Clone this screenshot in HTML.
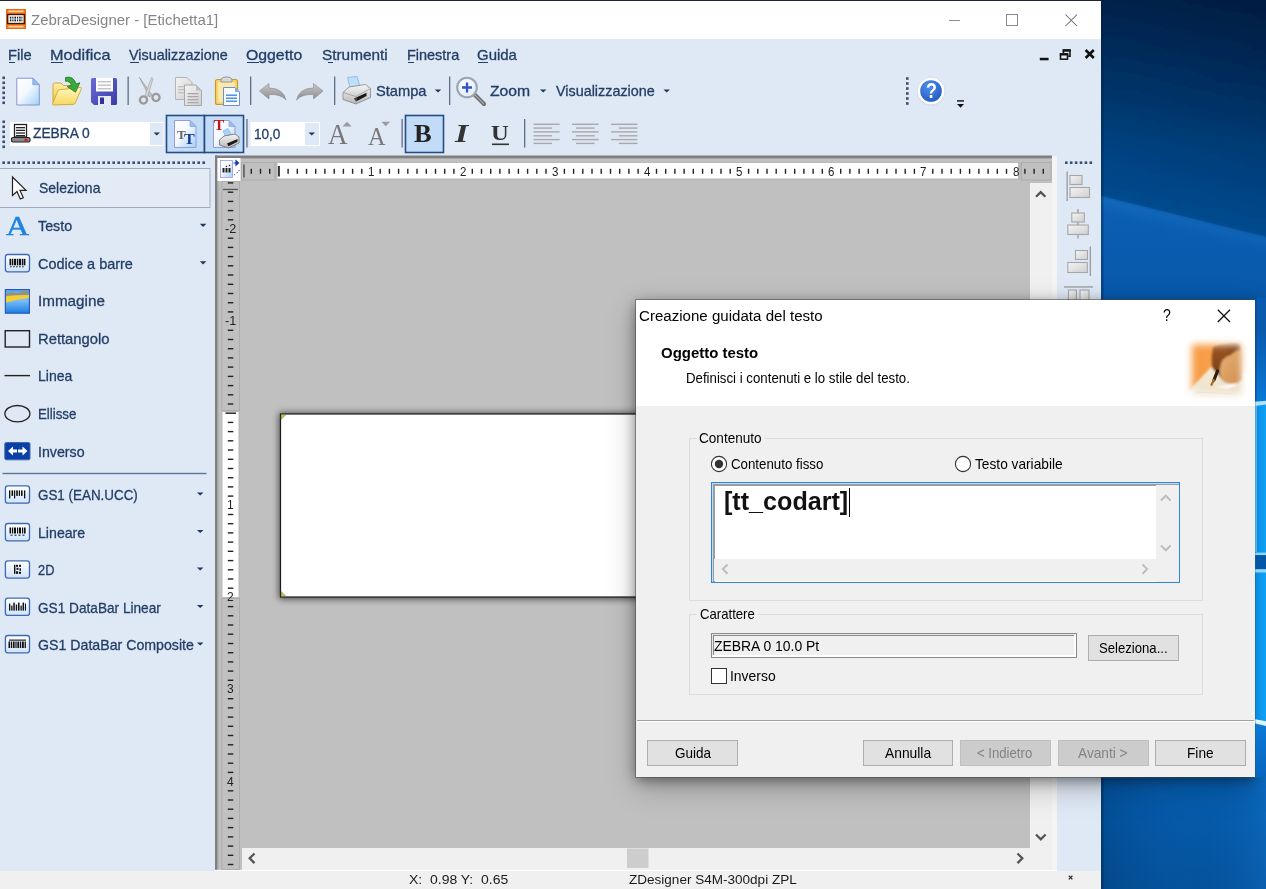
<!DOCTYPE html>
<html lang="it"><head><meta charset="utf-8"><title>ZebraDesigner - [Etichetta1]</title>
<style>

html,body{margin:0;padding:0;}
body{width:1266px;height:889px;overflow:hidden;position:relative;background:#0a5aa8;font-family:"Liberation Sans",sans-serif;}
.t{position:absolute;white-space:nowrap;transform-origin:0 50%;display:block;}
.abs{position:absolute;}
.hv{-webkit-text-stroke:0.3px currentColor;}
svg{position:absolute;overflow:visible;}
#app{position:absolute;left:0;top:0;width:1101px;height:889px;background:#dfe8f5;overflow:hidden;}
#dlg{position:absolute;left:636px;top:299px;width:619px;height:477px;background:#f0f0f0;box-shadow:0 0 0 1px rgba(70,70,70,.5), 0 3px 12px rgba(0,0,0,.42), 0 10px 28px rgba(0,0,0,.25);}
.btn{position:absolute;background:#e1e1e1;border:1px solid #adadad;box-sizing:border-box;}
.btn.dis{background:#cccccc;border-color:#bfbfbf;}
.grp{position:absolute;border:1px solid #dcdcdc;box-sizing:border-box;}
.sep{position:absolute;width:1px;background:#8a98ad;}

</style></head>
<body>
<div id="desktop" style="position:absolute;left:1101px;top:0;width:165px;height:889px;overflow:hidden;">
<svg width="165" height="889" viewBox="1101 0 165 889" style="left:0;top:0;">
<defs>
<linearGradient id="dgb" gradientUnits="userSpaceOnUse" x1="0" y1="190" x2="0" y2="889">
<stop offset="0" stop-color="#0b5fb4"/><stop offset="0.1" stop-color="#095bae"/><stop offset="0.16" stop-color="#0959ab"/><stop offset="0.3" stop-color="#0a66c0"/><stop offset="0.83" stop-color="#0868c2"/><stop offset="0.87" stop-color="#055cac"/><stop offset="1" stop-color="#04529a"/>
</linearGradient>
<linearGradient id="dgu" gradientUnits="userSpaceOnUse" x1="0" y1="0" x2="0" y2="240">
<stop offset="0" stop-color="#03234c"/><stop offset="0.2" stop-color="#032c5c"/><stop offset="0.42" stop-color="#04386f"/><stop offset="0.62" stop-color="#044483"/><stop offset="0.8" stop-color="#044a8d"/><stop offset="1" stop-color="#054f97"/>
</linearGradient>
<linearGradient id="dg2" x1="0" y1="0" x2="1" y2="0">
<stop offset="0" stop-color="#000c28" stop-opacity="0"/><stop offset="1" stop-color="#000c28" stop-opacity="0.3"/>
</linearGradient>
<linearGradient id="dg2m" x1="0" y1="0" x2="0" y2="1">
<stop offset="0" stop-color="#fff"/><stop offset="0.6" stop-color="#fff" stop-opacity="0.55"/><stop offset="1" stop-color="#fff" stop-opacity="0.15"/>
</linearGradient>
<mask id="dm2"><rect x="1090" y="-10" width="190" height="260" fill="url(#dg2m)"/></mask>
<linearGradient id="dg3" gradientUnits="userSpaceOnUse" x1="1183" y1="217" x2="1179" y2="235">
<stop offset="0" stop-color="#2a86d8" stop-opacity="0.28"/><stop offset="1" stop-color="#1068bc" stop-opacity="0"/>
</linearGradient>
<linearGradient id="dg6" gradientUnits="userSpaceOnUse" x1="1101" y1="0" x2="1266" y2="0">
<stop offset="0" stop-color="#02356e" stop-opacity="0.35"/><stop offset="0.6" stop-color="#0a5cb0" stop-opacity="0"/><stop offset="1" stop-color="#1a80e0" stop-opacity="0.3"/>
</linearGradient>
<filter id="dbl" x="-10%" y="-10%" width="120%" height="120%"><feGaussianBlur stdDeviation="2"/></filter>
</defs>
<rect x="1101" y="0" width="165" height="889" fill="url(#dgb)"/>
<g filter="url(#dbl)">
<polygon points="1090,-10 1280,-10 1280,241.500 1090,194" fill="url(#dgu)"/>
<polygon points="1090,-10 1280,-10 1280,241.500 1090,194" fill="url(#dg2)" mask="url(#dm2)"/>
</g>
<polygon points="1101,196 1266,237 1266,262 1101,221" fill="url(#dg3)"/>
<rect x="1101" y="777" width="165" height="112" fill="url(#dg6)"/>
<rect x="1101" y="0" width="2.500" height="889" fill="#021c40" opacity="0.35"/>
</svg></div>
<div id="app">
<div style="position:absolute;left:0px;top:0px;width:1101px;height:1px;background:#1d2733;"></div>
<div class="titlebar" style="position:absolute;left:0px;top:1px;width:1101px;height:38px;background:#ffffff;"></div>
<svg width="20" height="20" viewBox="0 0 21 21" style="left:6px;top:9px;">
<rect x="0" y="0" width="21" height="21" fill="#e8660c"/>
<rect x="1" y="1" width="19" height="19" fill="#f27a1a"/>
<rect x="2.5" y="1.5" width="16" height="2" fill="#f9c79a"/>
<rect x="2.5" y="17.5" width="16" height="2" fill="#f9c79a"/>
<rect x="1" y="5" width="19" height="11" fill="#3a1a08"/>
<rect x="2.5" y="6.5" width="16" height="8" fill="#fff"/>
<g fill="#1a1a1a"><rect x="4" y="8" width="1.6" height="5"/><rect x="6.6" y="8" width="1.2" height="5"/><rect x="8.8" y="8" width="1.8" height="5"/><rect x="11.6" y="8" width="1.2" height="5"/><rect x="13.8" y="8" width="1.6" height="5"/><rect x="16.2" y="8" width="1" height="5"/></g>
<rect x="3" y="10" width="15" height="1" fill="#fff" opacity="0.85"/>
</svg>
<span class="t" style="left:31.4px;top:11.9px;font-size:15px;line-height:15px;color:#858585;transform:scaleX(0.9980);">ZebraDesigner - [Etichetta1]</span>
<svg width="140" height="38" viewBox="960 1 140 38" style="left:960px;top:1px;">
<path d="M949 20.5h11" stroke="#8c8c8c" stroke-width="1" fill="none"/>
<rect x="1006.5" y="14.5" width="11" height="11" stroke="#8c8c8c" stroke-width="1" fill="none"/>
<path d="M1065.5 14.500l11.500 11.500M1077 14.500l-11.500 11.500" stroke="#6a6a6a" stroke-width="1.05" fill="none"/>
</svg>
<span class="t hv" style="left:8.0px;top:48.1px;font-size:14.5px;line-height:14.5px;color:#223e66;transform:scaleX(1.0101);">File</span>
<span class="t hv" style="left:49.9px;top:48.1px;font-size:14.5px;line-height:14.5px;color:#223e66;transform:scaleX(1.1187);">Modifica</span>
<span class="t hv" style="left:129.4px;top:48.1px;font-size:14.5px;line-height:14.5px;color:#223e66;transform:scaleX(0.9902);">Visualizzazione</span>
<span class="t hv" style="left:246.4px;top:48.1px;font-size:14.5px;line-height:14.5px;color:#223e66;transform:scaleX(1.0894);">Oggetto</span>
<span class="t hv" style="left:321.9px;top:48.1px;font-size:14.5px;line-height:14.5px;color:#223e66;transform:scaleX(1.0589);">Strumenti</span>
<span class="t hv" style="left:406.9px;top:48.1px;font-size:14.5px;line-height:14.5px;color:#223e66;transform:scaleX(0.9967);">Finestra</span>
<span class="t hv" style="left:477.4px;top:48.1px;font-size:14.5px;line-height:14.5px;color:#223e66;transform:scaleX(1.0313);">Guida</span>
<div style="position:absolute;left:8.6px;top:61.5px;width:6.4px;height:1px;background:#223e66;"></div>
<div style="position:absolute;left:50.5px;top:61.5px;width:12.5px;height:1px;background:#223e66;"></div>
<div style="position:absolute;left:130px;top:61.5px;width:9px;height:1px;background:#223e66;"></div>
<div style="position:absolute;left:247px;top:61.5px;width:11.5px;height:1px;background:#223e66;"></div>
<div style="position:absolute;left:328px;top:61.5px;width:4.5px;height:1px;background:#223e66;"></div>
<div style="position:absolute;left:407.5px;top:61.5px;width:6.5px;height:1px;background:#223e66;"></div>
<div style="position:absolute;left:478px;top:61.5px;width:10px;height:1px;background:#223e66;"></div>
<svg width="60" height="20" viewBox="1040 45 60 20" style="left:1040px;top:45px;">
<rect x="1039.800" y="57.800" width="8.800" height="2.500" fill="#111"/>
<path d="M1063.400 53v-2.300h6.600v5.600h-1.800" stroke="#111" stroke-width="1.500" fill="none"/>
<rect x="1062.600" y="49.100" width="8.200" height="2.300" fill="#111"/>
<rect x="1060.500" y="54.200" width="7" height="5" stroke="#111" stroke-width="1.500" fill="none"/>
<rect x="1059.800" y="53.100" width="8.500" height="2.400" fill="#111"/>
<path d="M1085.600 50l8.200 8M1093.800 50l-8.200 8" stroke="#111" stroke-width="2.600" fill="none"/>
</svg>
<svg width="1101" height="45" viewBox="0 70 1101 45" style="left:0;top:70px;">
<defs>
<linearGradient id="gdoc" x1="0" y1="0" x2="1" y2="1"><stop offset="0" stop-color="#ffffff"/><stop offset="0.45" stop-color="#f4f9ff"/><stop offset="1" stop-color="#9fd0f4"/></linearGradient>
<linearGradient id="gfold" x1="0" y1="0" x2="0" y2="1"><stop offset="0" stop-color="#fdf0a8"/><stop offset="1" stop-color="#f0c33a"/></linearGradient>
<linearGradient id="gfold2" x1="0" y1="0" x2="0" y2="1"><stop offset="0" stop-color="#fff6c0"/><stop offset="1" stop-color="#f7d860"/></linearGradient>
<linearGradient id="gflop" x1="0" y1="0" x2="1" y2="1"><stop offset="0" stop-color="#6a6ad8"/><stop offset="1" stop-color="#3c3ca8"/></linearGradient>
<linearGradient id="ggray" x1="0" y1="0" x2="0" y2="1"><stop offset="0" stop-color="#c8c8c8"/><stop offset="1" stop-color="#8c8c8c"/></linearGradient>
<linearGradient id="ggray2" x1="0" y1="0" x2="1" y2="1"><stop offset="0" stop-color="#f4f4f4"/><stop offset="1" stop-color="#cfcfcf"/></linearGradient>
<radialGradient id="ghelp" cx="0.4" cy="0.3" r="0.8"><stop offset="0" stop-color="#4f8fe8"/><stop offset="1" stop-color="#1f58c0"/></radialGradient>
<linearGradient id="gprn" x1="0" y1="0" x2="0" y2="1"><stop offset="0" stop-color="#f6f6f6"/><stop offset="1" stop-color="#b8b8b8"/></linearGradient>
<radialGradient id="glens" cx="0.4" cy="0.35" r="0.7"><stop offset="0" stop-color="#ffffff"/><stop offset="1" stop-color="#dfeaf8"/></radialGradient>
</defs>
<rect x="2.4" y="76.5" width="2.6" height="2.6" fill="#3d4f6e"/><rect x="2.4" y="81.5" width="2.6" height="2.6" fill="#3d4f6e"/><rect x="2.4" y="86.5" width="2.6" height="2.6" fill="#3d4f6e"/><rect x="2.4" y="91.5" width="2.6" height="2.6" fill="#3d4f6e"/><rect x="2.4" y="96.5" width="2.6" height="2.6" fill="#3d4f6e"/><rect x="2.4" y="101.5" width="2.6" height="2.6" fill="#3d4f6e"/>
<path d="M16.800 78.200h16l6.500 6.500v20.300h-22.500z" fill="url(#gdoc)" stroke="#8d92d6" stroke-width="1"/>
<path d="M32.800 78.200v6.500h6.500z" fill="#8cc4f2" stroke="#8d92d6" stroke-width="0.800"/>
<path d="M53 84.500q0-1.500 1.500-1.500h6.500l2.500 2.500h9.500q1.500 0 1.500 1.500v15.500q0 1.500-1.500 1.500h-18.500q-1.500 0-1.500-1.500z" fill="url(#gfold)" stroke="#c9a02c" stroke-width="0.900"/>
<path d="M52.600 103.500l5.200-12.500q0.600-1.300 2-1.300l20.500-2.200q1.600 0 1 1.400l-6 14q-0.600 1.400-2 1.400l-19.700 0.700q-1.500 0-1-1.500z" fill="url(#gfold2)" stroke="#d0a830" stroke-width="0.900"/>
<path d="M65.500 77.500q8-2 10.500 6.500l3.800-1.200-4.300 9.400-8.300-5.600 4.200-1.300q-1.400-4.300-5.900-4z" fill="#3aa83a" stroke="#1f7a22" stroke-width="0.800"/>
<path d="M92.500 78h23q1.500 0 1.500 1.500v24q0 1.500-1.500 1.500h-21.500l-3-3v-22.500q0-1.500 1.500-1.500z" fill="url(#gflop)"/>
<rect x="96" y="78" width="17" height="13.500" fill="#fdfdfd"/>
<g fill="#c2c2c8"><rect x="98" y="81" width="13" height="1.400"/><rect x="98" y="84.500" width="13" height="1.400"/><rect x="98" y="88" width="13" height="1.400"/></g>
<rect x="98" y="96" width="13" height="9" fill="#e8e8f4"/><rect x="100" y="97.500" width="4" height="6.500" fill="#3030a0"/>
<rect x="127.5" y="76.500" width="1.300" height="28.500" fill="#5f6f88"/>
<rect x="250" y="76.500" width="1.300" height="28.500" fill="#5f6f88"/>
<rect x="334" y="76.500" width="1.300" height="28.500" fill="#5f6f88"/>
<rect x="449" y="76.500" width="1.300" height="28.500" fill="#5f6f88"/>
<g fill="none" stroke="#9a9a9a" stroke-width="2.300"><circle cx="143.500" cy="100" r="3.600"/><circle cx="156" cy="97.500" r="3.600"/></g>
<path d="M139.500 77.500l12.500 17.500-2.500 2z" fill="#c4c4c4" stroke="#9a9a9a" stroke-width="0.700"/><path d="M151.500 77.500l1.500 1-5.500 18.500-2.500-1.500z" fill="#d8d8d8" stroke="#a4a4a4" stroke-width="0.700"/>
<path d="M175.500 77.500h11.500l5 5v17h-16.500z" fill="url(#ggray2)" stroke="#b4b4b4" stroke-width="1"/>
<g fill="#c0c0c0"><rect x="178" y="86" width="8" height="1.300"/><rect x="178" y="89" width="8" height="1.300"/><rect x="178" y="92" width="8" height="1.300"/></g>
<path d="M184.500 85h11.500l5.500 5.500v15h-17z" fill="url(#ggray2)" stroke="#a8a8a8" stroke-width="1"/>
<path d="M196 85v5.500h5.500z" fill="#bdbdbd"/>
<g fill="#a8a8a8"><rect x="187.500" y="93" width="11" height="1.300"/><rect x="187.500" y="96" width="11" height="1.300"/><rect x="187.500" y="99" width="11" height="1.300"/><rect x="187.500" y="102" width="11" height="1.300"/></g>
<rect x="215.500" y="79.500" width="22" height="25" rx="2" fill="#f7d46a" stroke="#c99a2a" stroke-width="1.200"/>
<rect x="218" y="82" width="17" height="20" fill="#fbe9a8"/>
<path d="M221 80.500q0-3.500 5.500-3.500t5.500 3.500v1.500h-11z" fill="#d8d8d8" stroke="#8c8c8c" stroke-width="0.900"/>
<path d="M223.500 87.500h11.500l4.500 4.500v13.500h-16z" fill="#fafdff" stroke="#6f8fd0" stroke-width="1"/>
<path d="M235 87.500v4.500h4.500z" fill="#7ab0ee"/>
<g fill="#3f8ae0"><rect x="226" y="94.500" width="11" height="1.400"/><rect x="226" y="97.500" width="11" height="1.400"/><rect x="226" y="100.500" width="11" height="1.400"/></g>
<path d="M259.500 91l9.500-7.500v4.500q14 0 17 12q-5-6-17-5.500v4.500z" fill="url(#ggray)" stroke="#8a8a8a" stroke-width="0.600"/>
<path d="M323 91l-9.500-7.500v4.500q-14 0-17 12q5-6 17-5.500v4.500z" fill="url(#ggray)" stroke="#8a8a8a" stroke-width="0.600"/>
<path d="M347.500 77.500l9.500-1 3.500 12-9.500 2.500z" fill="#bfe0fa" stroke="#7fb4e6" stroke-width="0.800"/>
<path d="M343 92.500l6-5.500 16.500-2.500 5 4v9l-14.500 6.500-13-4.500z" fill="url(#gprn)" stroke="#8e8e8e" stroke-width="0.900"/>
<path d="M343 92.500l13 4 14.500-8" fill="none" stroke="#9a9a9a" stroke-width="0.800"/>
<path d="M354 98.500l12.500-5.800v3.300l-10.500 5.500z" fill="#1a1a1a"/>
<path d="M356 96.800v7" stroke="#9a9a9a" stroke-width="0.700"/>
<path d="M474.500 94.500l9.500 9.500" stroke="#6a6a6a" stroke-width="4" stroke-linecap="round"/>
<path d="M474.500 94.500l9 9" stroke="#a8a8a8" stroke-width="1.400" stroke-linecap="round"/>
<circle cx="467" cy="87.500" r="9.800" fill="url(#glens)" stroke="#9aa4b2" stroke-width="2"/>
<path d="M467 82.500v10M462 87.500h10" stroke="#2d56c8" stroke-width="2.300"/>
<polygon points="434.8,89.5 441.2,89.5 438.0,92.5" fill="#1e395b"/>
<polygon points="540,89.5 546.4,89.5 543.2,92.5" fill="#1e395b"/>
<polygon points="663.5,89.5 669.9,89.5 666.7,92.5" fill="#1e395b"/>
<rect x="906" y="77.2" width="2.6" height="2.6" fill="#3d4f6e"/><rect x="906" y="82.2" width="2.6" height="2.6" fill="#3d4f6e"/><rect x="906" y="87.2" width="2.6" height="2.6" fill="#3d4f6e"/><rect x="906" y="92.2" width="2.6" height="2.6" fill="#3d4f6e"/><rect x="906" y="97.2" width="2.6" height="2.6" fill="#3d4f6e"/><rect x="906" y="102.2" width="2.6" height="2.6" fill="#3d4f6e"/>
<circle cx="931" cy="91.800" r="14" fill="#c9d2e2" opacity="0.7"/>
<circle cx="931" cy="91" r="14" fill="#fdfdff" stroke="#d4dcec" stroke-width="1"/>
<circle cx="931" cy="91" r="10.800" fill="url(#ghelp)"/>
<rect x="957" y="100.200" width="7" height="1.400" fill="#111"/>
<polygon points="957,104 964,104 960.500,107.800" fill="#111"/>
</svg>
<span class="t" style="left:925.7px;top:80.6px;font-size:21.5px;line-height:21.5px;color:#ffffff;transform:scaleX(0.8300);font-weight:bold;">?</span>
<span class="t hv" style="left:375.9px;top:84.3px;font-size:14.5px;line-height:14.5px;color:#223e66;transform:scaleX(1.0086);">Stampa</span>
<span class="t hv" style="left:490.4px;top:84.3px;font-size:14.5px;line-height:14.5px;color:#223e66;transform:scaleX(1.0847);">Zoom</span>
<span class="t hv" style="left:555.9px;top:84.3px;font-size:14.5px;line-height:14.5px;color:#223e66;transform:scaleX(0.9902);">Visualizzazione</span>
<svg width="1101" height="44" viewBox="0 112 1101 44" style="left:0;top:112px;">
<rect x="2.4" y="120.5" width="2.6" height="2.6" fill="#3d4f6e"/><rect x="2.4" y="125.5" width="2.6" height="2.6" fill="#3d4f6e"/><rect x="2.4" y="130.5" width="2.6" height="2.6" fill="#3d4f6e"/><rect x="2.4" y="135.5" width="2.6" height="2.6" fill="#3d4f6e"/><rect x="2.4" y="140.5" width="2.6" height="2.6" fill="#3d4f6e"/><rect x="2.4" y="145.5" width="2.6" height="2.6" fill="#3d4f6e"/>
<rect x="10" y="122" width="153.500" height="24" fill="#ffffff"/>
<rect x="150" y="123" width="13" height="22" fill="#dfe8f5"/>
<polygon points="153.5,132.5 160,132.5 156.75,135.6" fill="#1e395b"/>
<rect x="14.500" y="124.500" width="12" height="12.500" fill="#fff" stroke="#222" stroke-width="1.300"/>
<g fill="#222"><rect x="16" y="127" width="9" height="1.300"/><rect x="16" y="129.700" width="9" height="1.300"/><rect x="16" y="132.400" width="9" height="1.300"/><rect x="16" y="135" width="9" height="1.300"/></g>
<rect x="11.500" y="137.500" width="18.500" height="4.500" rx="1.500" fill="#8a8a8a" stroke="#222" stroke-width="1.200"/>
<rect x="24.500" y="138.700" width="3" height="2.300" fill="#e01818"/>
<rect x="166.500" y="115.500" width="38" height="37" fill="#c2dcf8" stroke="#264b85" stroke-width="1.600"/>
<rect x="204.500" y="115.500" width="39" height="37" fill="#c2dcf8" stroke="#264b85" stroke-width="1.600"/>
<path d="M174.500 120.500h15.500l6 6v21h-21.500z" fill="url(#gdoc)" stroke="#9a9ad8" stroke-width="1"/>
<path d="M190 120.500v6h6z" fill="#8cc4f2" stroke="#9a9ad8" stroke-width="0.700"/>
<path d="M213.500 120.500h15.500l6 6v21h-21.500z" fill="url(#gdoc)" stroke="#9a9ad8" stroke-width="1"/>
<path d="M229 120.500v6h6z" fill="#8cc4f2" stroke="#9a9ad8" stroke-width="0.700"/>
<path d="M223 131l5-2.500 3 5.500-5 3z" fill="#a8d4fa" stroke="#78b4ee" stroke-width="0.700"/>
<path d="M219.500 140l4.500-4 11-2 4 3v6l-10.500 5-9-3z" fill="url(#gprn)" stroke="#777" stroke-width="0.900"/>
<path d="M227 143.500l10.500-4.500v2.800l-9 4.400z" fill="#1a1a1a"/>
<rect x="246.3" y="119" width="1.300" height="28.500" fill="#5f6f88"/>
<rect x="401.5" y="119" width="1.300" height="28.500" fill="#5f6f88"/>
<rect x="524" y="119" width="1.300" height="28.500" fill="#5f6f88"/>
<rect x="250.500" y="122" width="69.500" height="24" fill="#ffffff"/>
<rect x="305" y="123" width="14" height="22" fill="#dfe8f5"/>
<polygon points="308.5,132.5 315,132.5 311.75,135.6" fill="#1e395b"/>
<polygon points="342.500,126.500 351.500,126.500 347,121.800" fill="#9a9a9a"/>
<polygon points="381.500,121.800 390,121.800 385.700,126.200" fill="#9a9a9a"/>
<rect x="405.500" y="115.500" width="38" height="37" fill="#c2dcf8" stroke="#264b85" stroke-width="1.600"/>
<rect x="492" y="143.500" width="17" height="1.600" fill="#333"/>
<rect x="533.5" y="123.6" width="26.1" height="1.400" fill="#a9a9a9"/><rect x="533.5" y="127.4" width="18.5" height="1.400" fill="#a9a9a9"/><rect x="533.5" y="131.2" width="26.1" height="1.400" fill="#a9a9a9"/><rect x="533.5" y="135.1" width="18.5" height="1.400" fill="#a9a9a9"/><rect x="533.5" y="138.9" width="26.1" height="1.400" fill="#a9a9a9"/><rect x="533.5" y="142.7" width="18.5" height="1.400" fill="#a9a9a9"/>
<rect x="572" y="123.6" width="26.6" height="1.400" fill="#a9a9a9"/><rect x="576" y="127.4" width="18.6" height="1.400" fill="#a9a9a9"/><rect x="572" y="131.2" width="26.6" height="1.400" fill="#a9a9a9"/><rect x="576" y="135.1" width="18.6" height="1.400" fill="#a9a9a9"/><rect x="572" y="138.9" width="26.6" height="1.400" fill="#a9a9a9"/><rect x="576" y="142.7" width="18.6" height="1.400" fill="#a9a9a9"/>
<rect x="611" y="123.6" width="26.4" height="1.400" fill="#a9a9a9"/><rect x="618.9" y="127.4" width="18.5" height="1.400" fill="#a9a9a9"/><rect x="611" y="131.2" width="26.4" height="1.400" fill="#a9a9a9"/><rect x="618.9" y="135.1" width="18.5" height="1.400" fill="#a9a9a9"/><rect x="611" y="138.9" width="26.4" height="1.400" fill="#a9a9a9"/><rect x="618.9" y="142.7" width="18.5" height="1.400" fill="#a9a9a9"/>
</svg>
<span class="t hv" style="left:32.9px;top:126.3px;font-size:14.5px;line-height:14.5px;color:#223e66;transform:scaleX(0.9508);">ZEBRA 0</span>
<span class="t hv" style="left:254.2px;top:126.5px;font-size:14.5px;line-height:14.5px;color:#223e66;transform:scaleX(0.9356);">10,0</span>
<span class="t" style="left:177.4px;top:129.8px;font-size:11.5px;line-height:11.5px;color:#666;transform:scaleX(1.1342);font-weight:bold;font-family:'Liberation Serif',serif;">T</span>
<span class="t" style="left:183.9px;top:131.4px;font-size:15.5px;line-height:15.5px;color:#1a3a9a;transform:scaleX(1.0349);font-weight:bold;font-family:'Liberation Serif',serif;">T</span>
<span class="t" style="left:213.9px;top:119.1px;font-size:14px;line-height:14px;color:#c01818;transform:scaleX(1.0923);font-weight:bold;font-family:'Liberation Serif',serif;">T</span>
<span class="t" style="left:328.1px;top:120.3px;font-size:29px;line-height:29px;color:#787878;transform:scaleX(0.9311);font-family:'Liberation Serif',serif;">A</span>
<span class="t" style="left:368.1px;top:123.6px;font-size:25px;line-height:25px;color:#787878;transform:scaleX(0.9693);font-family:'Liberation Serif',serif;">A</span>
<span class="t" style="left:414.4px;top:120.8px;font-size:25px;line-height:25px;color:#222;transform:scaleX(1.0614);font-weight:bold;font-family:'Liberation Serif',serif;">B</span>
<span class="t" style="left:455.4px;top:120.8px;font-size:25px;line-height:25px;color:#333;transform:scaleX(1.3566);font-weight:bold;font-family:'Liberation Serif',serif;font-style:italic;">I</span>
<span class="t" style="left:491.4px;top:121.9px;font-size:22px;line-height:22px;color:#333;transform:scaleX(1.1203);font-weight:bold;font-family:'Liberation Serif',serif;">U</span>
<svg width="215" height="720" viewBox="0 156 215 720" style="left:0;top:156px;">
<defs>
<linearGradient id="gbc" x1="0" y1="0" x2="0" y2="1"><stop offset="0" stop-color="#ffffff"/><stop offset="1" stop-color="#cfe4fb"/></linearGradient>
<linearGradient id="gsky" x1="0" y1="0" x2="0" y2="1"><stop offset="0" stop-color="#5aa8f0"/><stop offset="0.45" stop-color="#7cc0f8"/><stop offset="1" stop-color="#1d7ce2"/></linearGradient>
</defs>
<rect x="2.4" y="161.400" width="2.600" height="2.600" fill="#3d4f6e"/><rect x="7.4" y="161.400" width="2.600" height="2.600" fill="#3d4f6e"/><rect x="12.4" y="161.400" width="2.600" height="2.600" fill="#3d4f6e"/><rect x="17.4" y="161.400" width="2.600" height="2.600" fill="#3d4f6e"/><rect x="22.4" y="161.400" width="2.600" height="2.600" fill="#3d4f6e"/><rect x="27.4" y="161.400" width="2.600" height="2.600" fill="#3d4f6e"/><rect x="32.4" y="161.400" width="2.600" height="2.600" fill="#3d4f6e"/><rect x="37.4" y="161.400" width="2.600" height="2.600" fill="#3d4f6e"/><rect x="42.4" y="161.400" width="2.600" height="2.600" fill="#3d4f6e"/><rect x="47.4" y="161.400" width="2.600" height="2.600" fill="#3d4f6e"/><rect x="52.4" y="161.400" width="2.600" height="2.600" fill="#3d4f6e"/><rect x="57.4" y="161.400" width="2.600" height="2.600" fill="#3d4f6e"/><rect x="62.4" y="161.400" width="2.600" height="2.600" fill="#3d4f6e"/><rect x="67.4" y="161.400" width="2.600" height="2.600" fill="#3d4f6e"/><rect x="72.4" y="161.400" width="2.600" height="2.600" fill="#3d4f6e"/><rect x="77.4" y="161.400" width="2.600" height="2.600" fill="#3d4f6e"/><rect x="82.4" y="161.400" width="2.600" height="2.600" fill="#3d4f6e"/><rect x="87.4" y="161.400" width="2.600" height="2.600" fill="#3d4f6e"/><rect x="92.4" y="161.400" width="2.600" height="2.600" fill="#3d4f6e"/><rect x="97.4" y="161.400" width="2.600" height="2.600" fill="#3d4f6e"/><rect x="102.4" y="161.400" width="2.600" height="2.600" fill="#3d4f6e"/><rect x="107.4" y="161.400" width="2.600" height="2.600" fill="#3d4f6e"/><rect x="112.4" y="161.400" width="2.600" height="2.600" fill="#3d4f6e"/><rect x="117.4" y="161.400" width="2.600" height="2.600" fill="#3d4f6e"/><rect x="122.4" y="161.400" width="2.600" height="2.600" fill="#3d4f6e"/><rect x="127.4" y="161.400" width="2.600" height="2.600" fill="#3d4f6e"/><rect x="132.4" y="161.400" width="2.600" height="2.600" fill="#3d4f6e"/><rect x="137.4" y="161.400" width="2.600" height="2.600" fill="#3d4f6e"/><rect x="142.4" y="161.400" width="2.600" height="2.600" fill="#3d4f6e"/><rect x="147.4" y="161.400" width="2.600" height="2.600" fill="#3d4f6e"/><rect x="152.4" y="161.400" width="2.600" height="2.600" fill="#3d4f6e"/><rect x="157.4" y="161.400" width="2.600" height="2.600" fill="#3d4f6e"/><rect x="162.4" y="161.400" width="2.600" height="2.600" fill="#3d4f6e"/><rect x="167.4" y="161.400" width="2.600" height="2.600" fill="#3d4f6e"/><rect x="172.4" y="161.400" width="2.600" height="2.600" fill="#3d4f6e"/><rect x="177.4" y="161.400" width="2.600" height="2.600" fill="#3d4f6e"/><rect x="182.4" y="161.400" width="2.600" height="2.600" fill="#3d4f6e"/><rect x="187.4" y="161.400" width="2.600" height="2.600" fill="#3d4f6e"/><rect x="192.4" y="161.400" width="2.600" height="2.600" fill="#3d4f6e"/><rect x="197.4" y="161.400" width="2.600" height="2.600" fill="#3d4f6e"/><rect x="202.4" y="161.400" width="2.600" height="2.600" fill="#3d4f6e"/>
<rect x="-1" y="168.500" width="211" height="39" fill="#e3ebf7" stroke="#a3abb8" stroke-width="1"/>
<path d="M12.500 177v18.500l4.500-4 3.300 7.500 3-1.300-3.300-7.300h6z" fill="#ffffff" stroke="#222" stroke-width="1.200" stroke-linejoin="miter"/>
<rect x="5.400" y="254.5" width="24.100" height="17.300" rx="2.500" fill="url(#gbc)" stroke="#3f68b4" stroke-width="1.300"/><rect x="9.5" y="258.8" width="1.8" height="6.5" fill="#111"/><rect x="12" y="258.8" width="1.3" height="6.5" fill="#111"/><rect x="14" y="258.8" width="2.2" height="6.5" fill="#111"/><rect x="17" y="258.8" width="1.3" height="6.5" fill="#111"/><rect x="19" y="258.8" width="2.2" height="6.5" fill="#111"/><rect x="22" y="258.8" width="1.3" height="6.5" fill="#111"/><rect x="23.8" y="258.8" width="1.6" height="6.5" fill="#111"/><rect x="10" y="266.2" width="1.800" height="1.100" fill="#444"/><rect x="13" y="266.2" width="1.800" height="1.100" fill="#444"/><rect x="16" y="266.2" width="1.800" height="1.100" fill="#444"/><rect x="19" y="266.2" width="1.800" height="1.100" fill="#444"/><rect x="22" y="266.2" width="1.800" height="1.100" fill="#444"/>
<rect x="5.400" y="289.600" width="24" height="23.600" fill="url(#gsky)" stroke="#2a5cc0" stroke-width="1.200"/>
<path d="M6 293.500q5-2.500 9-1t7-1.200t7 1.200v4.500h-23z" fill="#8f9488"/>
<path d="M6 296.300q8-1.300 23-1.300v3q-12 1-23 4.500z" fill="#f6cf2e"/>
<rect x="5.200" y="330.700" width="24.300" height="16.300" fill="none" stroke="#222" stroke-width="1.400"/>
<rect x="4.500" y="374.900" width="25.500" height="1.400" fill="#222"/>
<ellipse cx="17.400" cy="413.700" rx="12.500" ry="8.200" fill="none" stroke="#222" stroke-width="1.300"/>
<rect x="4.800" y="442.500" width="25.200" height="17.300" rx="1.500" fill="#0a3fa6" stroke="#3f68b4" stroke-width="1"/>
<path d="M8 451l5-4.500v3h4v3h-4v3z" fill="#fff"/><path d="M27.500 451l-5-4.500v3h-4.500v3h4.500v3z" fill="#fff"/>
<rect x="2.500" y="472.800" width="204" height="1.400" fill="#5b7699"/>
<rect x="5.400" y="485.9" width="24.100" height="17.300" rx="2.500" fill="url(#gbc)" stroke="#3f68b4" stroke-width="1.300"/><rect x="9" y="490.4" width="1.3" height="8" fill="#111"/><rect x="11.5" y="490.4" width="1.6" height="5.5" fill="#111"/><rect x="14" y="490.4" width="1.2" height="8" fill="#111"/><rect x="16.2" y="490.4" width="1.6" height="5.5" fill="#111"/><rect x="18.8" y="490.4" width="1.2" height="5.5" fill="#111"/><rect x="21" y="490.4" width="1.6" height="5.5" fill="#111"/><rect x="24" y="490.4" width="1.3" height="8" fill="#111"/>
<rect x="5.400" y="523.5" width="24.100" height="17.300" rx="2.500" fill="url(#gbc)" stroke="#3f68b4" stroke-width="1.300"/><rect x="9.5" y="527.5" width="1.6" height="6" fill="#111"/><rect x="12" y="527.5" width="1.2" height="6" fill="#111"/><rect x="14" y="527.5" width="2" height="6" fill="#111"/><rect x="17" y="527.5" width="1.2" height="6" fill="#111"/><rect x="19" y="527.5" width="2" height="6" fill="#111"/><rect x="22" y="527.5" width="1.2" height="6" fill="#111"/><rect x="24" y="527.5" width="1.6" height="6" fill="#111"/><rect x="10.5" y="534.6" width="2" height="1.200" fill="#333"/><rect x="14.5" y="534.6" width="2" height="1.200" fill="#333"/><rect x="18.5" y="534.6" width="2" height="1.200" fill="#333"/><rect x="22.5" y="534.6" width="2" height="1.200" fill="#333"/>
<rect x="5.400" y="560.8" width="24.100" height="17.300" rx="2.500" fill="url(#gbc)" stroke="#3f68b4" stroke-width="1.300"/><rect x="14" y="564.8" width="1.4" height="9" fill="#111"/><rect x="16" y="564.8" width="2" height="2" fill="#111"/><rect x="19" y="564.8" width="2" height="2" fill="#111"/><rect x="16.5" y="567.8" width="2" height="2" fill="#111"/><rect x="19.5" y="568.3" width="1.5" height="2.5" fill="#111"/><rect x="16" y="571.3" width="2" height="2.5" fill="#111"/><rect x="18.8" y="571.8" width="2.2" height="2" fill="#111"/>
<rect x="5.400" y="598.1" width="24.100" height="17.300" rx="2.500" fill="url(#gbc)" stroke="#3f68b4" stroke-width="1.300"/><rect x="9" y="603.6" width="1.3" height="7" fill="#111"/><rect x="11.2" y="605.6" width="1.3" height="5" fill="#111"/><rect x="13.3" y="602.6" width="1.5" height="8" fill="#111"/><rect x="15.8" y="604.6" width="1.3" height="6" fill="#111"/><rect x="18" y="602.6" width="1.5" height="8" fill="#111"/><rect x="20.5" y="605.6" width="1.3" height="5" fill="#111"/><rect x="22.6" y="602.6" width="1.5" height="8" fill="#111"/><rect x="25" y="603.6" width="1" height="7" fill="#111"/>
<rect x="5.400" y="635.5" width="24.100" height="17.300" rx="2.500" fill="url(#gbc)" stroke="#3f68b4" stroke-width="1.300"/><rect x="8.5" y="641.5" width="1.5" height="6.500" fill="#111"/><rect x="10.8" y="641.5" width="1.2" height="6.500" fill="#111"/><rect x="12.8" y="641.5" width="1.8" height="6.500" fill="#111"/><rect x="15.4" y="641.5" width="1.2" height="6.500" fill="#111"/><rect x="17.4" y="641.5" width="1.8" height="6.500" fill="#111"/><rect x="20" y="641.5" width="1.2" height="6.500" fill="#111"/><rect x="22" y="641.5" width="1.8" height="6.500" fill="#111"/><rect x="24.6" y="641.5" width="1.3" height="6.500" fill="#111"/><rect x="9" y="639.5" width="17" height="1.300" fill="#333"/>
<polygon points="199.8,223.8 206.4,223.8 203.10000000000002,226.9" fill="#1e395b"/>
<polygon points="199.8,261.3 206.4,261.3 203.10000000000002,264.4" fill="#1e395b"/>
<polygon points="196.9,492.4 203.5,492.4 200.2,495.5" fill="#1e395b"/>
<polygon points="196.9,530 203.5,530 200.2,533.1" fill="#1e395b"/>
<polygon points="196.9,567.4 203.5,567.4 200.2,570.5" fill="#1e395b"/>
<polygon points="196.9,605 203.5,605 200.2,608.1" fill="#1e395b"/>
<polygon points="196.9,642.4 203.5,642.4 200.2,645.5" fill="#1e395b"/>
</svg>
<span class="t" style="left:5.7px;top:213.4px;font-size:27px;line-height:27px;color:#2082e0;transform:scaleX(1.1898);font-family:'Liberation Serif',serif;-webkit-text-stroke:0.5px #2082e0;">A</span>
<span class="t hv" style="left:39.2px;top:179.8px;font-size:15px;line-height:15px;color:#223e66;transform:scaleX(0.9320);">Seleziona</span>
<span class="t hv" style="left:38.4px;top:218.2px;font-size:15px;line-height:15px;color:#223e66;transform:scaleX(0.9540);">Testo</span>
<span class="t hv" style="left:38.4px;top:255.8px;font-size:15px;line-height:15px;color:#223e66;transform:scaleX(0.9646);">Codice a barre</span>
<span class="t hv" style="left:38.4px;top:293.2px;font-size:15px;line-height:15px;color:#223e66;transform:scaleX(1.0159);">Immagine</span>
<span class="t hv" style="left:38.4px;top:331.0px;font-size:15px;line-height:15px;color:#223e66;transform:scaleX(0.9855);">Rettangolo</span>
<span class="t hv" style="left:38.4px;top:368.2px;font-size:15px;line-height:15px;color:#223e66;transform:scaleX(0.9319);">Linea</span>
<span class="t hv" style="left:38.4px;top:406.0px;font-size:15px;line-height:15px;color:#223e66;transform:scaleX(0.8859);">Ellisse</span>
<span class="t hv" style="left:38.4px;top:443.6px;font-size:15px;line-height:15px;color:#223e66;transform:scaleX(0.9474);">Inverso</span>
<span class="t hv" style="left:38.4px;top:487.0px;font-size:15px;line-height:15px;color:#223e66;transform:scaleX(0.8936);">GS1 (EAN.UCC)</span>
<span class="t hv" style="left:38.4px;top:524.6px;font-size:15px;line-height:15px;color:#223e66;transform:scaleX(0.9434);">Lineare</span>
<span class="t hv" style="left:38.4px;top:562.0px;font-size:15px;line-height:15px;color:#223e66;transform:scaleX(0.8553);">2D</span>
<span class="t hv" style="left:38.4px;top:599.5px;font-size:15px;line-height:15px;color:#223e66;transform:scaleX(0.9092);">GS1 DataBar Linear</span>
<span class="t hv" style="left:38.4px;top:637.0px;font-size:15px;line-height:15px;color:#223e66;transform:scaleX(0.9445);">GS1 DataBar Composite</span>
<div class="mdi" style="position:absolute;left:215px;top:156px;width:837px;height:714px;background:#c0c0c0;"></div>
<svg width="890" height="735" viewBox="212 154 890 735" style="left:212px;top:154px;">
<rect x="215" y="155.500" width="837" height="2.500" fill="#7f7f7f"/>
<rect x="215" y="155.500" width="2.500" height="714.500" fill="#7f7f7f"/>
<rect x="217.500" y="158" width="834" height="1" fill="#a8a8a8"/>
<rect x="217.500" y="158" width="1" height="712" fill="#a8a8a8"/>
<rect x="1052" y="156" width="5" height="714" fill="#f4f4f4"/>
<rect x="215" y="869.800" width="842" height="1.200" fill="#ffffff"/>
<rect x="241" y="162" width="810" height="18.500" fill="#b9b9b9"/>
<rect x="241.500" y="162.500" width="33.500" height="17.500" fill="#c0c0c0" stroke="#adadad" stroke-width="1"/>
<rect x="1021.500" y="162.500" width="29.500" height="17.500" fill="#c0c0c0" stroke="#adadad" stroke-width="1"/>
<rect x="277.500" y="163" width="740.500" height="15.500" fill="#ffffff"/>
<rect x="221.500" y="181" width="18.500" height="688" fill="#b9b9b9"/>
<rect x="222" y="181.500" width="17.500" height="229" fill="#c0c0c0" stroke="#adadad" stroke-width="1"/>
<rect x="222" y="598.500" width="17.500" height="271" fill="#c0c0c0" stroke="#adadad" stroke-width="1"/>
<rect x="222.500" y="412" width="16" height="185" fill="#ffffff"/>
<rect x="250.6" y="168.800" width="1.400" height="5" fill="#222"/>
<rect x="259.8" y="168.800" width="1.400" height="5" fill="#222"/>
<rect x="269.0" y="168.800" width="1.400" height="5" fill="#222"/>
<rect x="277.9" y="166" width="2" height="10.500" fill="#333"/>
<rect x="287.4" y="168.800" width="1.400" height="5" fill="#222"/>
<rect x="296.6" y="168.800" width="1.400" height="5" fill="#222"/>
<rect x="305.8" y="168.800" width="1.400" height="5" fill="#222"/>
<rect x="315.0" y="168.800" width="1.400" height="5" fill="#222"/>
<rect x="324.2" y="168.800" width="1.400" height="5" fill="#222"/>
<rect x="333.5" y="168.800" width="1.400" height="5" fill="#222"/>
<rect x="342.7" y="168.800" width="1.400" height="5" fill="#222"/>
<rect x="351.9" y="168.800" width="1.400" height="5" fill="#222"/>
<rect x="361.1" y="168.800" width="1.400" height="5" fill="#222"/>
<rect x="379.5" y="168.800" width="1.400" height="5" fill="#222"/>
<rect x="388.7" y="168.800" width="1.400" height="5" fill="#222"/>
<rect x="397.9" y="168.800" width="1.400" height="5" fill="#222"/>
<rect x="407.1" y="168.800" width="1.400" height="5" fill="#222"/>
<rect x="416.3" y="168.800" width="1.400" height="5" fill="#222"/>
<rect x="425.6" y="168.800" width="1.400" height="5" fill="#222"/>
<rect x="434.8" y="168.800" width="1.400" height="5" fill="#222"/>
<rect x="444.0" y="168.800" width="1.400" height="5" fill="#222"/>
<rect x="453.2" y="168.800" width="1.400" height="5" fill="#222"/>
<rect x="471.6" y="168.800" width="1.400" height="5" fill="#222"/>
<rect x="480.8" y="168.800" width="1.400" height="5" fill="#222"/>
<rect x="490.0" y="168.800" width="1.400" height="5" fill="#222"/>
<rect x="499.2" y="168.800" width="1.400" height="5" fill="#222"/>
<rect x="508.4" y="168.800" width="1.400" height="5" fill="#222"/>
<rect x="517.7" y="168.800" width="1.400" height="5" fill="#222"/>
<rect x="526.9" y="168.800" width="1.400" height="5" fill="#222"/>
<rect x="536.1" y="168.800" width="1.400" height="5" fill="#222"/>
<rect x="545.3" y="168.800" width="1.400" height="5" fill="#222"/>
<rect x="563.7" y="168.800" width="1.400" height="5" fill="#222"/>
<rect x="572.9" y="168.800" width="1.400" height="5" fill="#222"/>
<rect x="582.1" y="168.800" width="1.400" height="5" fill="#222"/>
<rect x="591.3" y="168.800" width="1.400" height="5" fill="#222"/>
<rect x="600.5" y="168.800" width="1.400" height="5" fill="#222"/>
<rect x="609.8" y="168.800" width="1.400" height="5" fill="#222"/>
<rect x="619.0" y="168.800" width="1.400" height="5" fill="#222"/>
<rect x="628.2" y="168.800" width="1.400" height="5" fill="#222"/>
<rect x="637.4" y="168.800" width="1.400" height="5" fill="#222"/>
<rect x="655.8" y="168.800" width="1.400" height="5" fill="#222"/>
<rect x="665.0" y="168.800" width="1.400" height="5" fill="#222"/>
<rect x="674.2" y="168.800" width="1.400" height="5" fill="#222"/>
<rect x="683.4" y="168.800" width="1.400" height="5" fill="#222"/>
<rect x="692.6" y="168.800" width="1.400" height="5" fill="#222"/>
<rect x="701.9" y="168.800" width="1.400" height="5" fill="#222"/>
<rect x="711.1" y="168.800" width="1.400" height="5" fill="#222"/>
<rect x="720.3" y="168.800" width="1.400" height="5" fill="#222"/>
<rect x="729.5" y="168.800" width="1.400" height="5" fill="#222"/>
<rect x="747.9" y="168.800" width="1.400" height="5" fill="#222"/>
<rect x="757.1" y="168.800" width="1.400" height="5" fill="#222"/>
<rect x="766.3" y="168.800" width="1.400" height="5" fill="#222"/>
<rect x="775.5" y="168.800" width="1.400" height="5" fill="#222"/>
<rect x="784.8" y="168.800" width="1.400" height="5" fill="#222"/>
<rect x="794.0" y="168.800" width="1.400" height="5" fill="#222"/>
<rect x="803.2" y="168.800" width="1.400" height="5" fill="#222"/>
<rect x="812.4" y="168.800" width="1.400" height="5" fill="#222"/>
<rect x="821.6" y="168.800" width="1.400" height="5" fill="#222"/>
<rect x="840.0" y="168.800" width="1.400" height="5" fill="#222"/>
<rect x="849.2" y="168.800" width="1.400" height="5" fill="#222"/>
<rect x="858.4" y="168.800" width="1.400" height="5" fill="#222"/>
<rect x="867.6" y="168.800" width="1.400" height="5" fill="#222"/>
<rect x="876.8" y="168.800" width="1.400" height="5" fill="#222"/>
<rect x="886.1" y="168.800" width="1.400" height="5" fill="#222"/>
<rect x="895.3" y="168.800" width="1.400" height="5" fill="#222"/>
<rect x="904.5" y="168.800" width="1.400" height="5" fill="#222"/>
<rect x="913.7" y="168.800" width="1.400" height="5" fill="#222"/>
<rect x="932.1" y="168.800" width="1.400" height="5" fill="#222"/>
<rect x="941.3" y="168.800" width="1.400" height="5" fill="#222"/>
<rect x="950.5" y="168.800" width="1.400" height="5" fill="#222"/>
<rect x="959.7" y="168.800" width="1.400" height="5" fill="#222"/>
<rect x="968.9" y="168.800" width="1.400" height="5" fill="#222"/>
<rect x="978.2" y="168.800" width="1.400" height="5" fill="#222"/>
<rect x="987.4" y="168.800" width="1.400" height="5" fill="#222"/>
<rect x="996.6" y="168.800" width="1.400" height="5" fill="#222"/>
<rect x="1005.8" y="168.800" width="1.400" height="5" fill="#222"/>
<rect x="1024.2" y="168.800" width="1.400" height="5" fill="#222"/>
<rect x="1033.4" y="168.800" width="1.400" height="5" fill="#222"/>
<rect x="1042.6" y="168.800" width="1.400" height="5" fill="#222"/>
<rect x="243.200" y="164.500" width="1.500" height="13" fill="#555"/>
<rect x="227.800" y="182.2" width="5.500" height="1.400" fill="#222"/>
<rect x="227.800" y="191.5" width="5.500" height="1.400" fill="#222"/>
<rect x="227.800" y="200.7" width="5.500" height="1.400" fill="#222"/>
<rect x="227.800" y="209.9" width="5.500" height="1.400" fill="#222"/>
<rect x="227.800" y="219.1" width="5.500" height="1.400" fill="#222"/>
<rect x="227.800" y="237.5" width="5.500" height="1.400" fill="#222"/>
<rect x="227.800" y="246.7" width="5.500" height="1.400" fill="#222"/>
<rect x="227.800" y="255.9" width="5.500" height="1.400" fill="#222"/>
<rect x="227.800" y="265.1" width="5.500" height="1.400" fill="#222"/>
<rect x="227.800" y="274.3" width="5.500" height="1.400" fill="#222"/>
<rect x="227.800" y="283.6" width="5.500" height="1.400" fill="#222"/>
<rect x="227.800" y="292.8" width="5.500" height="1.400" fill="#222"/>
<rect x="227.800" y="302.0" width="5.500" height="1.400" fill="#222"/>
<rect x="227.800" y="311.2" width="5.500" height="1.400" fill="#222"/>
<rect x="227.800" y="329.6" width="5.500" height="1.400" fill="#222"/>
<rect x="227.800" y="338.8" width="5.500" height="1.400" fill="#222"/>
<rect x="227.800" y="348.0" width="5.500" height="1.400" fill="#222"/>
<rect x="227.800" y="357.2" width="5.500" height="1.400" fill="#222"/>
<rect x="227.800" y="366.4" width="5.500" height="1.400" fill="#222"/>
<rect x="227.800" y="375.7" width="5.500" height="1.400" fill="#222"/>
<rect x="227.800" y="384.9" width="5.500" height="1.400" fill="#222"/>
<rect x="227.800" y="394.1" width="5.500" height="1.400" fill="#222"/>
<rect x="227.800" y="403.3" width="5.500" height="1.400" fill="#222"/>
<rect x="225.500" y="412.4" width="10.500" height="1.600" fill="#333"/>
<rect x="227.800" y="421.7" width="5.500" height="1.400" fill="#222"/>
<rect x="227.800" y="430.9" width="5.500" height="1.400" fill="#222"/>
<rect x="227.800" y="440.1" width="5.500" height="1.400" fill="#222"/>
<rect x="227.800" y="449.3" width="5.500" height="1.400" fill="#222"/>
<rect x="227.800" y="458.6" width="5.500" height="1.400" fill="#222"/>
<rect x="227.800" y="467.8" width="5.500" height="1.400" fill="#222"/>
<rect x="227.800" y="477.0" width="5.500" height="1.400" fill="#222"/>
<rect x="227.800" y="486.2" width="5.500" height="1.400" fill="#222"/>
<rect x="227.800" y="495.4" width="5.500" height="1.400" fill="#222"/>
<rect x="227.800" y="513.8" width="5.500" height="1.400" fill="#222"/>
<rect x="227.800" y="523.0" width="5.500" height="1.400" fill="#222"/>
<rect x="227.800" y="532.2" width="5.500" height="1.400" fill="#222"/>
<rect x="227.800" y="541.4" width="5.500" height="1.400" fill="#222"/>
<rect x="227.800" y="550.6" width="5.500" height="1.400" fill="#222"/>
<rect x="227.800" y="559.9" width="5.500" height="1.400" fill="#222"/>
<rect x="227.800" y="569.1" width="5.500" height="1.400" fill="#222"/>
<rect x="227.800" y="578.3" width="5.500" height="1.400" fill="#222"/>
<rect x="227.800" y="587.5" width="5.500" height="1.400" fill="#222"/>
<rect x="227.800" y="605.9" width="5.500" height="1.400" fill="#222"/>
<rect x="227.800" y="615.1" width="5.500" height="1.400" fill="#222"/>
<rect x="227.800" y="624.3" width="5.500" height="1.400" fill="#222"/>
<rect x="227.800" y="633.5" width="5.500" height="1.400" fill="#222"/>
<rect x="227.800" y="642.8" width="5.500" height="1.400" fill="#222"/>
<rect x="227.800" y="652.0" width="5.500" height="1.400" fill="#222"/>
<rect x="227.800" y="661.2" width="5.500" height="1.400" fill="#222"/>
<rect x="227.800" y="670.4" width="5.500" height="1.400" fill="#222"/>
<rect x="227.800" y="679.6" width="5.500" height="1.400" fill="#222"/>
<rect x="227.800" y="698.0" width="5.500" height="1.400" fill="#222"/>
<rect x="227.800" y="707.2" width="5.500" height="1.400" fill="#222"/>
<rect x="227.800" y="716.4" width="5.500" height="1.400" fill="#222"/>
<rect x="227.800" y="725.6" width="5.500" height="1.400" fill="#222"/>
<rect x="227.800" y="734.8" width="5.500" height="1.400" fill="#222"/>
<rect x="227.800" y="744.1" width="5.500" height="1.400" fill="#222"/>
<rect x="227.800" y="753.3" width="5.500" height="1.400" fill="#222"/>
<rect x="227.800" y="762.5" width="5.500" height="1.400" fill="#222"/>
<rect x="227.800" y="771.7" width="5.500" height="1.400" fill="#222"/>
<rect x="227.800" y="790.1" width="5.500" height="1.400" fill="#222"/>
<rect x="227.800" y="799.3" width="5.500" height="1.400" fill="#222"/>
<rect x="227.800" y="808.5" width="5.500" height="1.400" fill="#222"/>
<rect x="227.800" y="817.7" width="5.500" height="1.400" fill="#222"/>
<rect x="227.800" y="826.9" width="5.500" height="1.400" fill="#222"/>
<rect x="227.800" y="836.2" width="5.500" height="1.400" fill="#222"/>
<rect x="227.800" y="845.4" width="5.500" height="1.400" fill="#222"/>
<rect x="227.800" y="854.6" width="5.500" height="1.400" fill="#222"/>
<rect x="227.800" y="863.8" width="5.500" height="1.400" fill="#222"/>
<rect x="223" y="188.800" width="15" height="1.300" fill="#555"/>
<rect x="217.500" y="158" width="23" height="23" fill="#ffffff"/>
<rect x="220.500" y="160.500" width="12" height="17" fill="url(#gdoc)" stroke="#9a9ad8" stroke-width="0.800"/>
<g fill="#222"><rect x="222.500" y="168" width="2" height="4.500"/><rect x="225.500" y="168" width="2" height="4.500"/><rect x="228.500" y="168" width="2" height="4.500"/><rect x="225.800" y="165.800" width="1.300" height="1.300"/><rect x="228.800" y="164.800" width="1.300" height="1.300"/></g>
<path d="M233.500 163h4.500M236 160.800l2.500 2.200-2.500 2.200z" stroke="#1a3aa8" stroke-width="1.200" fill="#1a3aa8"/>
<g fill="#5a78c8"><rect x="234" y="174" width="1.200" height="1.200"/><rect x="236.500" y="172" width="1.200" height="1.200"/><rect x="238.500" y="170" width="1.200" height="1.200"/></g>
<defs><filter id="lsh" x="-5%" y="-10%" width="110%" height="120%"><feGaussianBlur stdDeviation="3.8"/></filter></defs>
<rect x="279" y="413" width="738" height="186" fill="#000" opacity="0.62" filter="url(#lsh)"/>
<rect x="280.500" y="414" width="735" height="183" fill="#ffffff" stroke="#1a1a1a" stroke-width="1.200"/>
<polygon points="281,414.500 286,414.500 281,419.500" fill="#c8c832" stroke="#555" stroke-width="0.500"/>
<polygon points="281,596.500 286,596.500 281,591.500" fill="#c8c832" stroke="#555" stroke-width="0.500"/>
<rect x="1030" y="183" width="22" height="687" fill="#f0f0f0"/>
<rect x="242" y="848" width="810" height="22" fill="#f0f0f0"/>
<rect x="627" y="848.500" width="21.500" height="19.500" fill="#cdcdcd"/>
<path d="M1036 196.800l4.700-4.700 4.700 4.700" stroke="#555" stroke-width="2.300" fill="none"/>
<path d="M1036 834.500l4.800 4.800 4.800-4.800" stroke="#555" stroke-width="2.300" fill="none"/>
<path d="M254.500 853.500l-4.800 4.800 4.800 4.800" stroke="#555" stroke-width="2.300" fill="none"/>
<path d="M1017.500 853.500l4.800 4.800-4.800 4.800" stroke="#555" stroke-width="2.300" fill="none"/>
<rect x="1057" y="156" width="44" height="714" fill="#dfe8f5"/>
<rect x="1065.0" y="161.400" width="2.600" height="2.600" fill="#3d4f6e"/><rect x="1069.9" y="161.400" width="2.600" height="2.600" fill="#3d4f6e"/><rect x="1074.8" y="161.400" width="2.600" height="2.600" fill="#3d4f6e"/><rect x="1079.7" y="161.400" width="2.600" height="2.600" fill="#3d4f6e"/><rect x="1084.6" y="161.400" width="2.600" height="2.600" fill="#3d4f6e"/><rect x="1089.5" y="161.400" width="2.600" height="2.600" fill="#3d4f6e"/>
<rect x="1066.500" y="171.500" width="1.300" height="29.500" fill="#9a9a9a"/><rect x="1070" y="175.500" width="12" height="9" fill="url(#ggray2)" stroke="#a6a6a6" stroke-width="1.100"/><rect x="1070" y="187.500" width="19.500" height="10" fill="url(#ggray2)" stroke="#a6a6a6" stroke-width="1.100"/>
<rect x="1077.300" y="209" width="1.300" height="29.500" fill="#9a9a9a"/><rect x="1071.800" y="213" width="12.500" height="9" fill="url(#ggray2)" stroke="#a6a6a6" stroke-width="1.100"/><rect x="1067.800" y="225" width="20.500" height="9.500" fill="url(#ggray2)" stroke="#a6a6a6" stroke-width="1.100"/>
<rect x="1089.700" y="246.500" width="1.300" height="29.500" fill="#9a9a9a"/><rect x="1075.500" y="250.500" width="12" height="9" fill="url(#ggray2)" stroke="#a6a6a6" stroke-width="1.100"/><rect x="1067.800" y="262.500" width="19.500" height="10" fill="url(#ggray2)" stroke="#a6a6a6" stroke-width="1.100"/>
<rect x="1064" y="286.300" width="29" height="1.300" fill="#9a9a9a"/><rect x="1068.500" y="290" width="8" height="12" fill="url(#ggray2)" stroke="#a6a6a6" stroke-width="1.100"/><rect x="1080" y="290" width="9" height="18" fill="url(#ggray2)" stroke="#a6a6a6" stroke-width="1.100"/>
</svg>
<span class="t" style="left:367.8px;top:165.7px;font-size:12.5px;line-height:12.5px;color:#222;transform:scaleX(0.9207);">1</span>
<span class="t" style="left:459.9px;top:165.7px;font-size:12.5px;line-height:12.5px;color:#222;transform:scaleX(0.9207);">2</span>
<span class="t" style="left:552.0px;top:165.7px;font-size:12.5px;line-height:12.5px;color:#222;transform:scaleX(0.9207);">3</span>
<span class="t" style="left:644.1px;top:165.7px;font-size:12.5px;line-height:12.5px;color:#222;transform:scaleX(0.9207);">4</span>
<span class="t" style="left:736.2px;top:165.7px;font-size:12.5px;line-height:12.5px;color:#222;transform:scaleX(0.9207);">5</span>
<span class="t" style="left:828.3px;top:165.7px;font-size:12.5px;line-height:12.5px;color:#222;transform:scaleX(0.9207);">6</span>
<span class="t" style="left:920.4px;top:165.7px;font-size:12.5px;line-height:12.5px;color:#222;transform:scaleX(0.9207);">7</span>
<span class="t" style="left:1012.5px;top:165.7px;font-size:12.5px;line-height:12.5px;color:#222;transform:scaleX(0.9207);">8</span>
<span class="t" style="left:224.7px;top:222.9px;font-size:12.5px;line-height:12.5px;color:#222;transform:scaleX(1.0078);">-2</span>
<span class="t" style="left:224.7px;top:315.0px;font-size:12.5px;line-height:12.5px;color:#222;transform:scaleX(1.0078);">-1</span>
<span class="t" style="left:227.0px;top:499.2px;font-size:12.5px;line-height:12.5px;color:#222;transform:scaleX(0.9639);">1</span>
<span class="t" style="left:227.0px;top:591.3px;font-size:12.5px;line-height:12.5px;color:#222;transform:scaleX(0.9639);">2</span>
<span class="t" style="left:227.0px;top:683.4px;font-size:12.5px;line-height:12.5px;color:#222;transform:scaleX(0.9639);">3</span>
<span class="t" style="left:227.0px;top:775.5px;font-size:12.5px;line-height:12.5px;color:#222;transform:scaleX(0.9639);">4</span>
<div class="status" style="position:absolute;left:0px;top:871px;width:1101px;height:18px;background:#f0f0f0;"></div>
<span class="t" style="left:409.4px;top:873.0px;font-size:13.5px;line-height:13.5px;color:#1a1a1a;transform:scaleX(1.0353);">X:&nbsp; 0.98 Y:&nbsp; 0.65</span>
<span class="t" style="left:628.9px;top:873.0px;font-size:13.5px;line-height:13.5px;color:#1a1a1a;transform:scaleX(1.0023);">ZDesigner S4M-300dpi ZPL</span>
<svg width="6" height="6" viewBox="0 0 6 6" style="left:1068px;top:874.500px;"><path d="M0.800 0.800l3.600 3.600M4.400 0.800l-3.600 3.600" stroke="#333" stroke-width="1.300"/></svg>
</div>
<div id="dlg" style="left:636px;top:300px;width:619px;height:477px;">
<div class="hdr" style="position:absolute;left:0px;top:0px;width:619px;height:105.5px;background:#ffffff;"></div>
<span class="t" style="left:3.4px;top:8.1px;font-size:15.2px;line-height:15.2px;color:#000;transform:scaleX(0.9933);">Creazione guidata del testo</span>
<span class="t" style="left:527.4px;top:7.5px;font-size:16px;line-height:16px;color:#000;transform:scaleX(0.8767);">?</span>
<svg width="14" height="14" viewBox="0 0 14 14" style="left:581px;top:9px;"><path d="M0.800 0.800l12.200 12.200M13 0.800l-12.200 12.200" stroke="#111" stroke-width="1.300" fill="none"/></svg>
<span class="t" style="left:25.2px;top:46.1px;font-size:14px;line-height:14px;color:#000;transform:scaleX(1.0683);font-weight:bold;">Oggetto testo</span>
<span class="t" style="left:50.0px;top:70.6px;font-size:14.3px;line-height:14.3px;color:#000;transform:scaleX(0.9267);">Definisci i contenuti e lo stile del testo.</span>
<svg width="70" height="70" viewBox="1181 334 70 70" style="left:545px;top:34px;">
<defs><filter id="fb" x="-30%" y="-30%" width="160%" height="160%"><feGaussianBlur stdDeviation="3.8"/></filter>
<filter id="fb2" x="-30%" y="-30%" width="160%" height="160%"><feGaussianBlur stdDeviation="1.1"/></filter>
<filter id="fb3" x="-30%" y="-30%" width="160%" height="160%"><feGaussianBlur stdDeviation="0.5"/></filter>
<mask id="pm"><rect x="1192" y="344.500" width="49.500" height="50" fill="#fff" filter="url(#fb)"/></mask>
<linearGradient id="pg1" x1="0" y1="0" x2="1" y2="0"><stop offset="0" stop-color="#f79a40"/><stop offset="0.5" stop-color="#f7a04c"/><stop offset="1" stop-color="#f4b884"/></linearGradient>
<linearGradient id="pg2" x1="0" y1="0" x2="1" y2="1"><stop offset="0" stop-color="#f6ecd8"/><stop offset="1" stop-color="#eadcc4"/></linearGradient>
<linearGradient id="pg3" x1="0" y1="0" x2="1" y2="1"><stop offset="0" stop-color="#e9b478"/><stop offset="1" stop-color="#d08c4c"/></linearGradient>
<linearGradient id="pg4" x1="0" y1="0" x2="0" y2="1"><stop offset="0" stop-color="#a05a24"/><stop offset="1" stop-color="#6e3612"/></linearGradient>
</defs>
<g mask="url(#pm)">
<rect x="1183" y="336" width="66" height="66" fill="url(#pg1)"/>
<g filter="url(#fb2)">
<polygon points="1183,397 1211,367 1224,376 1250,372 1250,403 1183,403" fill="url(#pg2)"/>
<path d="M1213 347q6-3 13-3.500q8-2 14 0l2 8v26q-3 5-9 6q-8 0-12-5l-4-6q-4-2-5-6q-1-10 1-19.500z" fill="url(#pg4)"/>
<path d="M1222 361q4-5 9-6q3-5 9-8q3 3 3 10v22q-4 5-11 5q-7-1-11-6q-3-8 1-17z" fill="url(#pg3)"/>
<path d="M1227 347q6-3 12-2l2 5q-6 1-12 6q-2-4-2-9z" fill="#8a4c20" opacity="0.800"/>
<path d="M1216 386q8 1 15-2l6-1q-2 4-8 5q-8 1-13-2z" fill="#ffffff" opacity="0.900"/>
</g>
<g filter="url(#fb3)">
<path d="M1217.500 371l-3.500 9" stroke="#2e1a0c" stroke-width="3.200" stroke-linecap="round"/>
<path d="M1213.800 380l-2.300 4.800" stroke="#a86c28" stroke-width="2.300" stroke-linecap="round"/>
<path d="M1196 392l40 2M1200 396l30 1" stroke="#d8cab0" stroke-width="0.700" opacity="0.600"/>
</g>
</g>
</svg>
<div class="grp" style="position:absolute;left:53px;top:137.5px;width:513.5px;height:163px;"></div>
<div style="position:absolute;left:60.5px;top:130px;width:68px;height:14px;background:#f0f0f0;"></div>
<span class="t" style="left:63.4px;top:131.0px;font-size:14.5px;line-height:14.5px;color:#000;transform:scaleX(0.9356);">Contenuto</span>
<div class="grp" style="position:absolute;left:53px;top:313.5px;width:513.5px;height:81.7px;"></div>
<div style="position:absolute;left:60.5px;top:306px;width:61px;height:14px;background:#f0f0f0;"></div>
<span class="t" style="left:63.8px;top:307.2px;font-size:14.5px;line-height:14.5px;color:#000;transform:scaleX(0.9067);">Carattere</span>
<svg width="18" height="18" viewBox="0 0 18 18" style="left:74.0px;top:154.5px;"><circle cx="9" cy="9" r="7.600" fill="#fff" stroke="#333" stroke-width="1.100"/><circle cx="9" cy="9" r="4.200" fill="#333"/></svg>
<svg width="18" height="18" viewBox="0 0 18 18" style="left:318.0px;top:154.5px;"><circle cx="9" cy="9" r="7.600" fill="#fff" stroke="#333" stroke-width="1.100"/></svg>
<span class="t" style="left:95.0px;top:157.3px;font-size:14.5px;line-height:14.5px;color:#000;transform:scaleX(0.9161);">Contenuto fisso</span>
<span class="t" style="left:339.0px;top:157.3px;font-size:14.5px;line-height:14.5px;color:#000;transform:scaleX(0.9452);">Testo variabile</span>
<div class="edit" style="position:absolute;left:75px;top:182px;width:469px;height:100.5px;background:#ffffff;box-sizing:border-box;border:1px solid #2f86d9;"></div>
<div style="position:absolute;left:76px;top:183px;width:467px;height:1px;background:#bfdcf6;"></div>
<div style="position:absolute;left:76px;top:183px;width:1px;height:98.5px;background:#bfdcf6;"></div>
<div style="position:absolute;left:77px;top:184px;width:466px;height:1.5px;background:#9c9c9c;"></div>
<div style="position:absolute;left:77px;top:184px;width:1.5px;height:97.5px;background:#9c9c9c;"></div>
<div style="position:absolute;left:520px;top:185px;width:23px;height:96.5px;background:#f0f0f0;"></div>
<div style="position:absolute;left:78px;top:259.3px;width:465px;height:22.2px;background:#f0f0f0;"></div>
<svg width="470" height="101" viewBox="711 482 470 101" style="left:75px;top:182px;"><path d="M1161 500.500l4.800-4.800 4.800 4.800" stroke="#bdbdbd" stroke-width="2" fill="none"/><path d="M1161 545.500l4.800 4.800 4.800-4.800" stroke="#bdbdbd" stroke-width="2" fill="none"/><path d="M727.500 564.500l-4.600 4.600 4.600 4.600" stroke="#bdbdbd" stroke-width="2" fill="none"/><path d="M1142.500 564.500l4.600 4.600-4.600 4.600" stroke="#bdbdbd" stroke-width="2" fill="none"/></svg>
<span class="t" style="left:87.9px;top:188.6px;font-size:25px;line-height:25px;color:#111;transform:scaleX(1.0049);font-weight:bold;">[tt_codart]</span>
<div style="position:absolute;left:213px;top:188px;width:1px;height:29px;background:#000;"></div>
<div class="field" style="position:absolute;left:75px;top:333px;width:366px;height:25px;background:#f0f0f0;box-sizing:border-box;border:1px solid #8a8a8a;"></div>
<div style="position:absolute;left:76px;top:334px;width:364px;height:23px;box-sizing:border-box;border:2px solid #ffffff;border-top:1px solid #e6e6e6;border-left:1px solid #e6e6e6;"></div>
<div style="position:absolute;left:77px;top:335px;width:361px;height:1.2px;background:#8a8a8a;"></div>
<div style="position:absolute;left:77px;top:335px;width:1.2px;height:20px;background:#8a8a8a;"></div>
<span class="t" style="left:78.4px;top:338.7px;font-size:14.5px;line-height:14.5px;color:#000;transform:scaleX(0.9598);">ZEBRA 0 10.0 Pt</span>
<div class="chk" style="position:absolute;left:75px;top:367.5px;width:16px;height:16px;background:#fff;box-sizing:border-box;border:1px solid #333;"></div>
<span class="t" style="left:94.4px;top:368.7px;font-size:14.5px;line-height:14.5px;color:#000;transform:scaleX(0.9612);">Inverso</span>
<div style="position:absolute;left:1px;top:419.5px;width:617px;height:1px;background:#a0a0a0;"></div>
<div style="position:absolute;left:1px;top:420.5px;width:617px;height:1px;background:#ffffff;"></div>
<div class="btn" style="position:absolute;left:451.5px;top:335px;width:91.2px;height:25.5px;"></div><span class="t" style="left:462.8px;top:341.0px;font-size:14.5px;line-height:14.5px;color:#000;transform:scaleX(0.9054);">Seleziona...</span>
<div class="btn" style="position:absolute;left:11px;top:439.5px;width:91px;height:26.2px;"></div><span class="t" style="left:38.9px;top:445.5px;font-size:14.5px;line-height:14.5px;color:#000;transform:scaleX(0.9305);">Guida</span>
<div class="btn" style="position:absolute;left:226.7px;top:439.5px;width:90.3px;height:26.2px;"></div><span class="t" style="left:248.7px;top:445.5px;font-size:14.5px;line-height:14.5px;color:#000;transform:scaleX(0.9531);">Annulla</span>
<div class="btn dis" style="position:absolute;left:324px;top:439.5px;width:91px;height:26.2px;"></div><span class="t" style="left:341.4px;top:445.5px;font-size:14.5px;line-height:14.5px;color:#838383;transform:scaleX(0.9070);">&lt; Indietro</span>
<div class="btn dis" style="position:absolute;left:421.6px;top:439.5px;width:91.0px;height:26.2px;"></div><span class="t" style="left:442.0px;top:445.5px;font-size:14.5px;line-height:14.5px;color:#838383;transform:scaleX(0.9442);">Avanti &gt;</span>
<div class="btn" style="position:absolute;left:519px;top:439.5px;width:91px;height:26.2px;"></div><span class="t" style="left:551.4px;top:445.5px;font-size:14.5px;line-height:14.5px;color:#000;transform:scaleX(0.9431);">Fine</span>
</div>
<svg id="strip" width="11" height="500" viewBox="1255 290 11 500" style="left:1255px;top:290px;">
<defs>
<linearGradient id="sg1" gradientUnits="userSpaceOnUse" x1="0" y1="290" x2="0" y2="400">
<stop offset="0" stop-color="#0a5cb0"/><stop offset="0.35" stop-color="#095aad"/><stop offset="0.6" stop-color="#0a64bc"/><stop offset="1" stop-color="#0a78d6"/></linearGradient>
<linearGradient id="sg2" gradientUnits="userSpaceOnUse" x1="1255" y1="0" x2="1266" y2="0">
<stop offset="0" stop-color="#0a86dc"/><stop offset="0.5" stop-color="#0c98ee"/><stop offset="1" stop-color="#10a0f2"/></linearGradient>
<linearGradient id="sg3" gradientUnits="userSpaceOnUse" x1="0" y1="725" x2="0" y2="790">
<stop offset="0" stop-color="#0a7ad6"/><stop offset="0.7" stop-color="#0868c2"/><stop offset="1" stop-color="#075fb4"/></linearGradient>
</defs>
<rect x="1255.300" y="298" width="11" height="104" fill="url(#sg1)"/>
<rect x="1255.300" y="401" width="11" height="320" fill="url(#sg2)"/>
<rect x="1255.300" y="406" width="1.500" height="146" fill="#7cccf8" opacity="0.800"/>
<polygon points="1255.300,401.800 1266,400.800 1266,404.500 1255.300,406" fill="#b4e0f8"/>
<rect x="1255.300" y="552.600" width="11" height="2.600" fill="#90d8fa"/>
<rect x="1255.300" y="555.200" width="11" height="14" fill="#0556a4"/>
<rect x="1255.300" y="569.200" width="11" height="3.300" fill="#90d8fa"/>
<rect x="1255.300" y="724" width="11" height="53.500" fill="url(#sg3)"/>
<polygon points="1255.300,719.300 1266,721.300 1266,726 1255.300,723.600" fill="#e2f4ff"/>
<rect x="1255.300" y="298" width="1.200" height="103" fill="#04407e" opacity="0.600"/>
</svg>
</body></html>
